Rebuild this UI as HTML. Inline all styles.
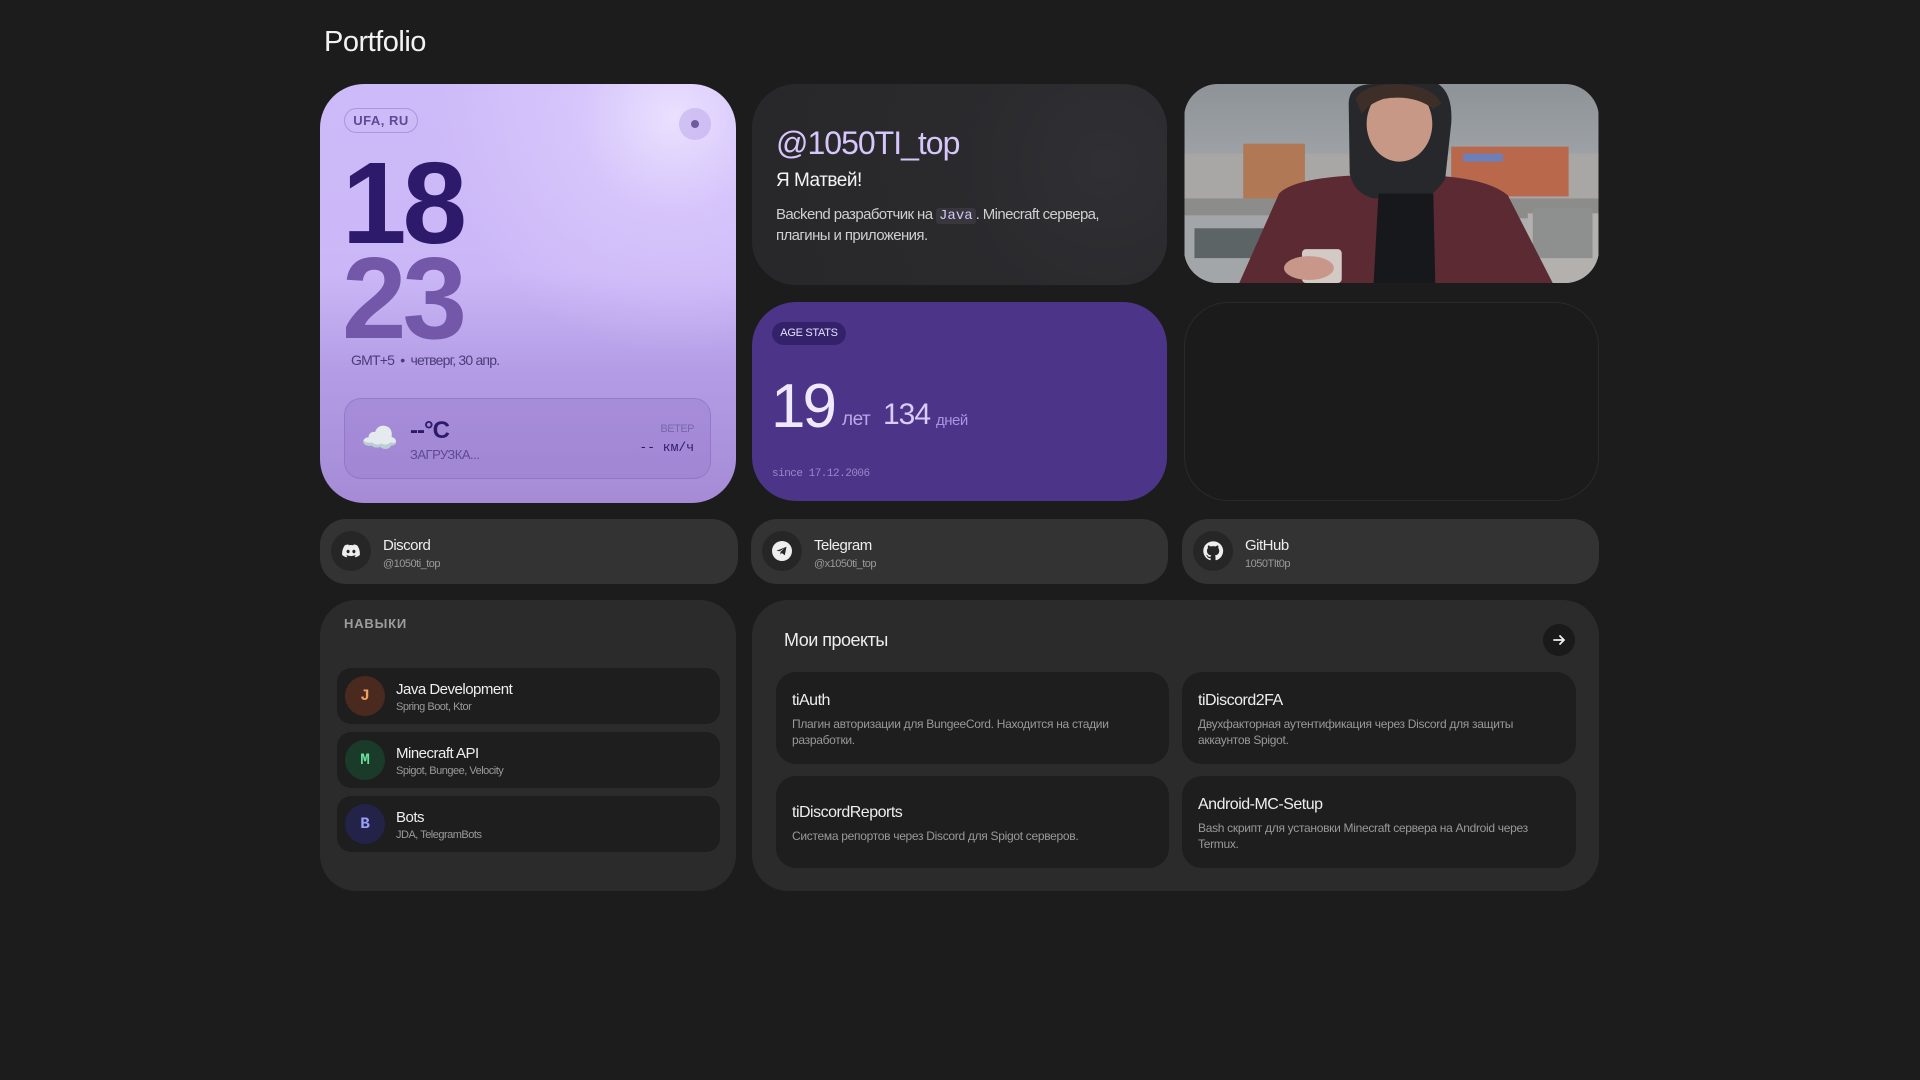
<!DOCTYPE html>
<html><head><meta charset="utf-8"><style>
*{box-sizing:border-box;margin:0;padding:0}
body{width:1920px;height:1080px;background:#1c1c1c;font-family:"Liberation Sans","Noto Sans CJK SC",sans-serif;color:#eee;position:relative;overflow:hidden}
.a{position:absolute}
.card{position:absolute;border-radius:44px;overflow:hidden}
.mono{font-family:"Liberation Mono",monospace}
.t{letter-spacing:-0.5px}
.d{letter-spacing:-0.3px}
</style></head><body>
<div class="a" style="left:324px;top:26px;font-size:29px;color:#f2f2f2;letter-spacing:-0.5px">Portfolio</div>

<!-- clock -->
<div class="card" style="left:320px;top:84px;width:416px;height:419px;background:radial-gradient(circle at 85% 8%,rgba(236,226,255,.95) 0,rgba(220,205,253,.6) 18%,rgba(210,192,250,0) 45%),linear-gradient(180deg,#cdbbf9 0%,#cbb7f7 45%,#b49de6 68%,#a58bd6 100%)">
 <div class="a" style="left:24px;top:24px;width:74px;height:25px;border:1px solid rgba(110,80,170,.35);border-radius:13px;font-size:13px;font-weight:bold;color:#5e4a94;text-align:center;line-height:23px;letter-spacing:.5px">UFA, RU</div>
 <div class="a" style="left:359px;top:24px;width:32px;height:32px;border-radius:50%;background:rgba(180,160,230,.45)"><div class="a" style="left:12px;top:12px;width:8px;height:8px;border-radius:50%;background:#6f5a9e"></div></div>
 <div class="a" style="left:22px;top:72px;font-size:116px;font-weight:bold;line-height:95px;color:#2e1a6b;letter-spacing:-4px">18</div>
 <div class="a" style="left:22px;top:167px;font-size:116px;font-weight:bold;line-height:95px;color:#7357a8;letter-spacing:-4px">23</div>
 <div class="a" style="left:31px;top:268px;font-size:14px;color:#4b3b78;letter-spacing:-.8px">GMT+5 &nbsp;•&nbsp; четверг, 30 апр.</div>
 <div class="a" style="left:24px;top:314px;width:367px;height:81px;border-radius:17px;background:rgba(150,120,200,.35);border:1px solid rgba(120,90,180,.35)">
  <div class="a" style="left:16px;top:22px;font-size:30px">☁️</div>
  <div class="a" style="left:65px;top:18px;font-size:24px;font-weight:bold;color:#2e1a6b;letter-spacing:-1px">--°C</div>
  <div class="a t" style="left:65px;top:48px;font-size:13px;color:#5e4a94">ЗАГРУЗКА...</div>
  <div class="a t" style="right:16px;top:24px;font-size:11px;color:#7a66aa">ВЕТЕР</div>
  <div class="a mono" style="right:16px;top:41px;font-size:13px;color:#2e1a6b">-- км/ч</div>
 </div>
</div>

<!-- bio -->
<div class="card" style="left:752px;top:84px;width:415px;height:201px;background:radial-gradient(circle at 85% 40%,#303034 0,#2a2a2d 40%,#28282a 100%)">
 <div class="a" style="left:24px;top:41px;font-size:32px;color:#d6c6fc;letter-spacing:-1px">@1050TI_top</div>
 <div class="a t" style="left:24px;top:86px;font-size:19px;color:#f4f4f4">Я Матвей!</div>
 <div class="a" style="left:24px;top:121px;width:380px;font-size:15px;line-height:19px;color:#cfcfcf;letter-spacing:-.6px">Backend разработчик на <span class="mono" style="background:#38383c;color:#d6c6fc;padding:0 3px;border-radius:3px;font-size:14px;letter-spacing:0">Java</span>. Minecraft сервера, плагины и приложения.</div>
</div>

<!-- photo -->
<div class="card" style="left:1184px;top:84px;width:415px;height:199px;border-radius:34px">
<svg width="415" height="199" viewBox="0 0 416 200">
<defs><linearGradient id="sk" x1="0" y1="0" x2="0" y2="1"><stop offset="0" stop-color="#8e9398"/><stop offset="1" stop-color="#b9bcc0"/></linearGradient></defs>
<rect width="416" height="200" fill="url(#sk)"/>
<rect x="0" y="70" width="416" height="50" fill="#a9a7a6"/>
<rect x="59" y="60" width="62" height="60" fill="#b07855"/>
<rect x="268" y="63" width="118" height="50" fill="#b9684c"/>
<rect x="280" y="70" width="40" height="8" fill="#6c7fb8"/>
<rect x="0" y="115" width="416" height="20" fill="#8c8d8a"/>
<rect x="0" y="132" width="100" height="68" fill="#a3a6a8"/>
<rect x="10" y="145" width="80" height="30" fill="#5c6466"/>
<rect x="345" y="130" width="71" height="70" fill="#b3b0ae"/>
<rect x="350" y="125" width="60" height="50" fill="#8e9090"/>
<path d="M55 200 L95 110 Q110 95 170 92 L250 92 Q305 95 325 112 L370 200Z" fill="#5b2a33"/>
<path d="M165 20 Q165 0 190 0 L255 0 Q270 10 268 40 L262 95 Q250 115 235 115 L190 115 Q170 110 166 90Z" fill="#27282c"/>
<path d="M195 110 L250 110 L252 200 L190 200Z" fill="#17181b"/>
<ellipse cx="216" cy="40" rx="33" ry="38" fill="#c79886"/>
<path d="M172 15 Q180 0 215 0 Q250 2 258 20 L250 25 Q230 10 200 15 Q185 20 178 30Z" fill="#3d2e28"/>
<rect x="118" y="166" width="40" height="34" rx="4" fill="#d4cac5"/>
<ellipse cx="125" cy="185" rx="25" ry="12" fill="#c9978a"/>
</svg></div>

<!-- age -->
<div class="card" style="left:752px;top:302px;width:415px;height:199px;background:#4c3589">
 <div class="a" style="left:20px;top:20px;width:74px;height:23px;border-radius:12px;background:#33226a;font-size:11px;color:#e8e0ff;text-align:center;line-height:23px;letter-spacing:-.3px">AGE STATS</div>
 <div class="a" style="left:19px;top:70px;font-size:62px;color:#efe8ff;letter-spacing:-3px;line-height:70px">19</div>
 <div class="a t" style="left:90px;top:107px;font-size:19px;color:#bba8ea">лет</div>
 <div class="a" style="left:131px;top:96px;font-size:30px;color:#d8ccf8;letter-spacing:-1px">134</div>
 <div class="a t" style="left:184px;top:110px;font-size:15px;color:#a994e0">дней</div>
 <div class="a mono" style="left:20px;top:166px;font-size:11px;color:#9a86cc;letter-spacing:-.5px">since 17.12.2006</div>
</div>

<!-- empty -->
<div class="card" style="left:1184px;top:302px;width:415px;height:199px;border:1px solid #2a2a2a;background:#1b1b1b"></div>

<!-- socials -->
<div class="card" style="left:320px;top:519px;width:418px;height:65px;border-radius:26px;background:#333">
 <div class="a" style="left:11px;top:12px;width:40px;height:40px;border-radius:50%;background:#262626"><svg class="a" style="left:10px;top:10px" width="20" height="20" viewBox="0 0 24 24"><path fill="#eee" d="M19.5 5.3A17 17 0 0 0 15.3 4l-.5 1.1a15.6 15.6 0 0 0-5.6 0L8.7 4a17 17 0 0 0-4.2 1.3C1.8 9.3 1.1 13.2 1.4 17a17 17 0 0 0 5.2 2.6l1.1-1.8a11 11 0 0 1-1.7-.8l.4-.3a12 12 0 0 0 11.2 0l.4.3-1.7.8 1.1 1.8a17 17 0 0 0 5.2-2.6c.4-4.4-.7-8.3-3.1-11.7zM8.5 14.7c-1 0-1.9-1-1.9-2.1s.8-2.1 1.9-2.1 1.9 1 1.9 2.1-.8 2.1-1.9 2.1zm7 0c-1 0-1.9-1-1.9-2.1s.8-2.1 1.9-2.1 1.9 1 1.9 2.1-.8 2.1-1.9 2.1z"/></svg></div>
 <div class="a t" style="left:63px;top:18px;font-size:15px;color:#eee">Discord</div>
 <div class="a t" style="left:63px;top:39px;font-size:11px;color:#9a9a9a">@1050ti_top</div>
</div>
<div class="card" style="left:751px;top:519px;width:417px;height:65px;border-radius:26px;background:#333">
 <div class="a" style="left:11px;top:12px;width:40px;height:40px;border-radius:50%;background:#262626"><div class="a" style="left:10px;top:10px;width:20px;height:20px;border-radius:50%;background:#eee"></div><svg class="a" style="left:10px;top:10px" width="20" height="20" viewBox="0 0 20 20"><path fill="#262626" d="M4.5 9.8l10-4-1.7 8.5-3-2.3-1.5 1.5.2-2.6 4-3.7-5 3.1z"/></svg></div>
 <div class="a t" style="left:63px;top:18px;font-size:15px;color:#eee">Telegram</div>
 <div class="a t" style="left:63px;top:39px;font-size:11px;color:#9a9a9a">@x1050ti_top</div>
</div>
<div class="card" style="left:1182px;top:519px;width:417px;height:65px;border-radius:26px;background:#333">
 <div class="a" style="left:11px;top:12px;width:40px;height:40px;border-radius:50%;background:#262626"><svg class="a" style="left:9px;top:9px" width="22" height="22" viewBox="0 0 24 24"><path fill="#eee" d="M12 1.5a10.5 10.5 0 0 0-3.3 20.5c.5.1.7-.2.7-.5v-1.8c-2.9.6-3.5-1.4-3.5-1.4-.5-1.2-1.2-1.5-1.2-1.5-1-.7.1-.6.1-.6 1 .1 1.6 1.1 1.6 1.1.9 1.6 2.5 1.1 3.1.9.1-.7.4-1.1.7-1.4-2.3-.3-4.8-1.2-4.8-5.2 0-1.1.4-2.1 1.1-2.8-.1-.3-.5-1.3.1-2.8 0 0 .9-.3 2.9 1.1a10 10 0 0 1 5.2 0c2-1.4 2.9-1.1 2.9-1.1.6 1.5.2 2.5.1 2.8.7.7 1.1 1.7 1.1 2.8 0 4-2.5 4.9-4.8 5.2.4.3.7 1 .7 1.9v2.9c0 .3.2.6.7.5A10.5 10.5 0 0 0 12 1.5z"/></svg></div>
 <div class="a t" style="left:63px;top:18px;font-size:15px;color:#eee">GitHub</div>
 <div class="a t" style="left:63px;top:39px;font-size:11px;color:#9a9a9a">1050TIt0p</div>
</div>

<!-- skills -->
<div class="card" style="left:320px;top:600px;width:416px;height:291px;border-radius:36px;background:#2b2b2b">
 <div class="a" style="left:24px;top:16px;font-size:13px;font-weight:bold;color:#9d9d9d;letter-spacing:.8px">НАВЫКИ</div>
 <div class="a" style="left:17px;top:68px;width:383px;height:56px;border-radius:14px;background:#1e1e1e">
  <div class="a mono" style="left:8px;top:8px;width:40px;height:40px;border-radius:50%;background:#4a2a1f;color:#f0a060;font-weight:bold;font-size:16px;text-align:center;line-height:40px">J</div>
  <div class="a t" style="left:59px;top:13px;font-size:15px;color:#eee">Java Development</div>
  <div class="a t" style="left:59px;top:33px;font-size:11px;color:#9a9a9a">Spring Boot, Ktor</div>
 </div>
 <div class="a" style="left:17px;top:132px;width:383px;height:56px;border-radius:14px;background:#1e1e1e">
  <div class="a mono" style="left:8px;top:8px;width:40px;height:40px;border-radius:50%;background:#1a3a2a;color:#6fe09a;font-weight:bold;font-size:16px;text-align:center;line-height:40px">M</div>
  <div class="a t" style="left:59px;top:13px;font-size:15px;color:#eee">Minecraft API</div>
  <div class="a t" style="left:59px;top:33px;font-size:11px;color:#9a9a9a">Spigot, Bungee, Velocity</div>
 </div>
 <div class="a" style="left:17px;top:196px;width:383px;height:56px;border-radius:14px;background:#1e1e1e">
  <div class="a mono" style="left:8px;top:8px;width:40px;height:40px;border-radius:50%;background:#23234a;color:#9aa0f5;font-weight:bold;font-size:16px;text-align:center;line-height:40px">B</div>
  <div class="a t" style="left:59px;top:13px;font-size:15px;color:#eee">Bots</div>
  <div class="a t" style="left:59px;top:33px;font-size:11px;color:#9a9a9a">JDA, TelegramBots</div>
 </div>
</div>

<!-- projects -->
<div class="card" style="left:752px;top:600px;width:847px;height:291px;border-radius:36px;background:#2b2b2b">
 <div class="a t" style="left:32px;top:30px;font-size:18px;color:#eee">Мои проекты</div>
 <div class="a" style="left:791px;top:24px;width:32px;height:32px;border-radius:50%;background:#1a1a1a"><svg class="a" style="left:8px;top:8px" width="16" height="16" viewBox="0 0 16 16"><path d="M3 8h10M9 4l4 4-4 4" stroke="#eee" stroke-width="1.8" fill="none" stroke-linecap="round" stroke-linejoin="round"/></svg></div>
 <div class="a" style="left:24px;top:72px;width:393px;height:92px;border-radius:20px;background:#1e1e1e">
  <div class="a t" style="left:16px;top:20px;font-size:16px;color:#eee">tiAuth</div>
  <div class="a d" style="left:16px;top:44px;width:345px;font-size:12px;line-height:16px;color:#999">Плагин авторизации для BungeeCord. Находится на стадии разработки.</div>
 </div>
 <div class="a" style="left:430px;top:72px;width:394px;height:92px;border-radius:20px;background:#1e1e1e">
  <div class="a t" style="left:16px;top:20px;font-size:16px;color:#eee">tiDiscord2FA</div>
  <div class="a d" style="left:16px;top:44px;width:345px;font-size:12px;line-height:16px;color:#999">Двухфакторная аутентификация через Discord для защиты аккаунтов Spigot.</div>
 </div>
 <div class="a" style="left:24px;top:176px;width:393px;height:92px;border-radius:20px;background:#1e1e1e">
  <div class="a t" style="left:16px;top:28px;font-size:16px;color:#eee">tiDiscordReports</div>
  <div class="a d" style="left:16px;top:52px;width:345px;font-size:12px;line-height:16px;color:#999">Система репортов через Discord для Spigot серверов.</div>
 </div>
 <div class="a" style="left:430px;top:176px;width:394px;height:92px;border-radius:20px;background:#1e1e1e">
  <div class="a t" style="left:16px;top:20px;font-size:16px;color:#eee">Android-MC-Setup</div>
  <div class="a d" style="left:16px;top:44px;width:345px;font-size:12px;line-height:16px;color:#999">Bash скрипт для установки Minecraft сервера на Android через Termux.</div>
 </div>
</div>
</body></html>
